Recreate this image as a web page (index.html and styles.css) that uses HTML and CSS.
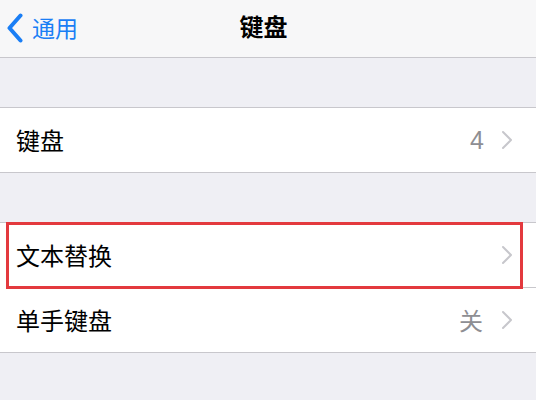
FILE: index.html
```html
<!DOCTYPE html>
<html lang="zh-CN">
<head>
<meta charset="utf-8">
<link rel="stylesheet" href="styles.css">
</head>
<body>
<div class="nav">
  <div class="back">
    <svg class="back-icon" width="18" height="30" viewBox="0 0 18 30"><path d="M14.5 2.5 L3.5 15 L14.5 27.5" fill="none" stroke="#1a7ef5" stroke-width="4" stroke-linecap="round" stroke-linejoin="round"/></svg>
    <span class="back-text">通用</span>
  </div>
  <div class="title">键盘</div>
  <div class="spacer"></div>
</div>
<div class="gap first"></div>
<div class="section">
  <div class="row">
    <span class="label">键盘</span>
    <span class="value num">4</span>
    <svg class="chev" width="12" height="20" viewBox="0 0 12 20"><path d="M2 2 L10 10 L2 18" fill="none" stroke="#c7c7cc" stroke-width="2" stroke-linecap="round" stroke-linejoin="round"/></svg>
  </div>
</div>
<div class="gap"></div>
<div class="section">
  <div class="row sep highlighted">
    <span class="label">文本替换</span>
    <svg class="chev" width="12" height="20" viewBox="0 0 12 20"><path d="M2 2 L10 10 L2 18" fill="none" stroke="#c7c7cc" stroke-width="2" stroke-linecap="round" stroke-linejoin="round"/></svg>
    <div class="mark"></div>
  </div>
  <div class="row">
    <span class="label">单手键盘</span>
    <span class="value">关</span>
    <svg class="chev" width="12" height="20" viewBox="0 0 12 20"><path d="M2 2 L10 10 L2 18" fill="none" stroke="#c7c7cc" stroke-width="2" stroke-linecap="round" stroke-linejoin="round"/></svg>
  </div>
</div>
</body>
</html>
```
FILE: styles.css
```css
html, body {
  margin: 0;
  padding: 0;
}
body {
  width: 536px;
  height: 400px;
  overflow: hidden;
  background: #efeff4;
  font-family: "Noto Sans CJK SC", "Liberation Sans", sans-serif;
  color: #000;
}
.nav {
  height: 57px;
  border-bottom: 1px solid #c8c7cc;
  background: #f7f7f8;
  display: grid;
  grid-template-columns: 1fr auto 1fr;
  align-items: center;
}
.back {
  display: flex;
  align-items: center;
  padding-left: 6px;
  margin-top: -4px;
}
.back-icon {
  display: block;
  margin-top: 2px;
}
.back-text {
  color: #1a7ef5;
  font-size: 23px;
  line-height: 30px;
  margin-left: 8px;
}
.title {
  font-size: 24px;
  font-weight: 700;
  line-height: 30px;
  margin-top: -6px;
  margin-right: 9px;
}
.gap {
  height: 49px;
}
.section {
  background: #fff;
  border-top: 1px solid #c8c7cc;
  border-bottom: 1px solid #c8c7cc;
}
.row {
  position: relative;
  height: 64px;
  display: flex;
  align-items: center;
  padding: 0 23px 0 16px;
}
.row.sep {
  margin-bottom: 1px;
}
.row.sep::after {
  content: "";
  position: absolute;
  left: 16px;
  right: 0;
  bottom: -1px;
  height: 1px;
  background: #c8c7cc;
}
.label {
  flex: 1;
  font-size: 24px;
  line-height: 30px;
}
.value {
  color: #8e8e93;
  font-size: 24px;
  line-height: 30px;
  margin-right: 18px;
}
.value.num {
  font-family: "Liberation Sans", sans-serif;
  font-size: 25px;
  margin-right: 17px;
}
.chev {
  display: block;
}
.mark {
  position: absolute;
  left: 6px;
  right: 13px;
  top: -1px;
  bottom: -2px;
  border: 3px solid #e3393e;
  z-index: 2;
}
```
